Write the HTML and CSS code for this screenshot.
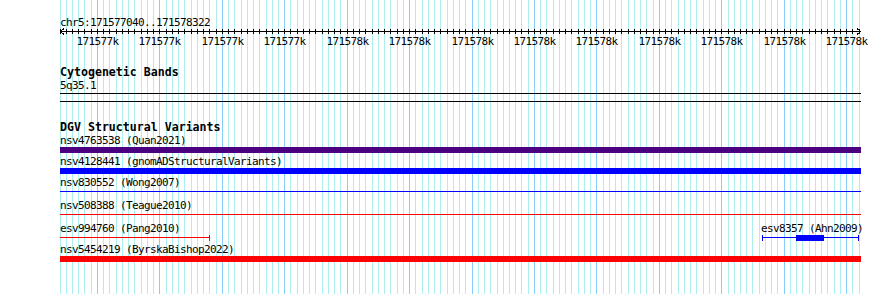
FILE: index.html
```html
<!DOCTYPE html>
<html lang="en">
<head>
  <meta charset="UTF-8">
  <meta name="viewport" content="width=device-width, initial-scale=1.0">
  <title>chr5:171577040..171578322</title>
  <link rel="stylesheet" href="styles.css">
</head>
<body>

  <div class="browser">
    <svg class="grid" id="grid" width="890" height="294" shape-rendering="crispEdges"></svg>

    <div class="panel">
      <div class="segment">chr5:171577040..171578322</div>
      <svg class="ruler" id="ruler" width="802" height="20"></svg>

      <div class="track cyto">
        <div class="track-title">Cytogenetic Bands</div>
        <div class="label">5q35.1</div>
        <div class="band"></div>
      </div>

      <div class="track dgv">
        <div class="track-title">DGV Structural Variants</div>

        <div class="feature">
          <div class="label">nsv4763538 (Quan2021)</div>
          <div class="glyph"><div class="bar indigo"></div></div>
        </div>

        <div class="feature">
          <div class="label">nsv4128441 (gnomADStructuralVariants)</div>
          <div class="glyph"><div class="bar blue"></div></div>
        </div>

        <div class="feature">
          <div class="label">nsv830552 (Wong2007)</div>
          <div class="glyph"><div class="line blue"></div></div>
        </div>

        <div class="feature">
          <div class="label">nsv508388 (Teague2010)</div>
          <div class="glyph"><div class="line red"></div></div>
        </div>

        <div class="feature">
          <div class="label">
            esv994760 (Pang2010)
            <span class="label-at" style="left: 701px">esv8357 (Ahn2009)</span>
          </div>
          <div class="glyph">
            <div class="seg red" style="left: 0; width: 150px"></div>
            <div class="tick red" style="left: 149px"></div>

            <div class="seg blue" style="left: 702px; width: 97px"></div>
            <div class="tick blue" style="left: 702px"></div>
            <div class="tick blue" style="left: 798px"></div>
            <div class="box blue" style="left: 736px; width: 28px"></div>
          </div>
        </div>

        <div class="feature">
          <div class="label">nsv5454219 (ByrskaBishop2022)</div>
          <div class="glyph"><div class="bar red"></div></div>
        </div>
      </div>
    </div>
  </div>

  <script>
    const NS = 'http://www.w3.org/2000/svg';
    const start = 171577040;
    const end = 171578322;
    const scale = 801 / (end - start + 1);

    function add(svg, tag, attrs, text) {
      const el = document.createElementNS(NS, tag);
      for (const k in attrs) el.setAttribute(k, attrs[k]);
      if (text) el.textContent = text;
      svg.appendChild(el);
      return el;
    }

    function pos(bp) {
      return Math.floor((bp - start) * scale) + 0.5;
    }

    // background grid, one line every 10bp
    const grid = document.getElementById('grid');
    for (let bp = start; bp <= end; bp += 10) {
      const x = 60 + pos(bp);
      add(grid, 'line', { x1: x, y1: 0, x2: x, y2: 294, class: bp % 100 === 0 ? 'major' : 'minor' });
    }

    // ruler
    const ruler = document.getElementById('ruler');
    add(ruler, 'line', { x1: 0, y1: 2.5, x2: 801, y2: 2.5, class: 'axis' });
    add(ruler, 'polyline', { points: '4,-0.5 0.5,2.5 4,5.5', class: 'axis' });
    add(ruler, 'polyline', { points: '797,-0.5 800.5,2.5 797,5.5', class: 'axis' });
    for (let bp = start; bp <= end; bp += 10) {
      const x = pos(bp);
      add(ruler, 'line', { x1: x, y1: 0, x2: x, y2: 5, class: 'axis' });
      if (bp % 100 === 0) {
        add(ruler, 'text', { x: x, y: 16, class: 'tick-label' }, Math.round(bp / 1000) + 'k');
      }
    }
  </script>

</body>
</html>
```

FILE: styles.css
```css
* {
  margin: 0;
  padding: 0;
  box-sizing: border-box;
}

body {
  background: #fff;
  font-family: 'DejaVu Sans Mono', 'Liberation Mono', monospace;
  font-size: 11px;
  letter-spacing: -0.62px;
  color: #000;
}

.browser {
  position: relative;
  width: 890px;
  height: 294px;
  overflow: hidden;
}

.grid {
  position: absolute;
  left: 0;
  top: 0;
}

.grid .minor {
  stroke: #afeeee;
}

.grid .major {
  stroke: #87cefa;
}

.panel {
  position: relative;
  padding: 16px 0 0 60px;
}

.segment {
  height: 13px;
  line-height: 13px;
}

.ruler {
  display: block;
  overflow: visible;
}

.ruler .axis {
  stroke: #000;
  stroke-width: 1;
  fill: none;
  shape-rendering: crispEdges;
}

.ruler .tick-label {
  font-family: 'DejaVu Sans Mono', 'Liberation Mono', monospace;
  font-size: 11px;
  letter-spacing: -0.62px;
  text-anchor: middle;
  fill: #000;
}

.track {
  width: 801px;
}

.track-title {
  height: 13px;
  font-size: 11.6px;
  font-weight: bold;
  letter-spacing: 0;
  line-height: 13px;
}

.label {
  position: relative;
  height: 13px;
  line-height: 13px;
  white-space: nowrap;
}

.label-at {
  position: absolute;
  top: 0;
}

.cyto {
  margin-top: 17px;
}

.band {
  margin-top: 1px;
  height: 9px;
  border-top: 1px solid #000;
  border-bottom: 1px solid #000;
}

.dgv {
  margin-top: 19px;
}

.feature {
  margin-bottom: 2px;
}

.glyph {
  position: relative;
  height: 6px;
}

.bar {
  height: 6px;
}

.line {
  height: 1px;
  margin-top: 2px;
}

.seg {
  position: absolute;
  top: 2px;
  height: 1px;
}

.tick {
  position: absolute;
  top: 0;
  width: 1px;
  height: 6px;
}

.box {
  position: absolute;
  top: 0;
  height: 6px;
}

.indigo { background: #4b0082; }
.blue { background: #0000ff; }
.red { background: #ff0000; }
```
